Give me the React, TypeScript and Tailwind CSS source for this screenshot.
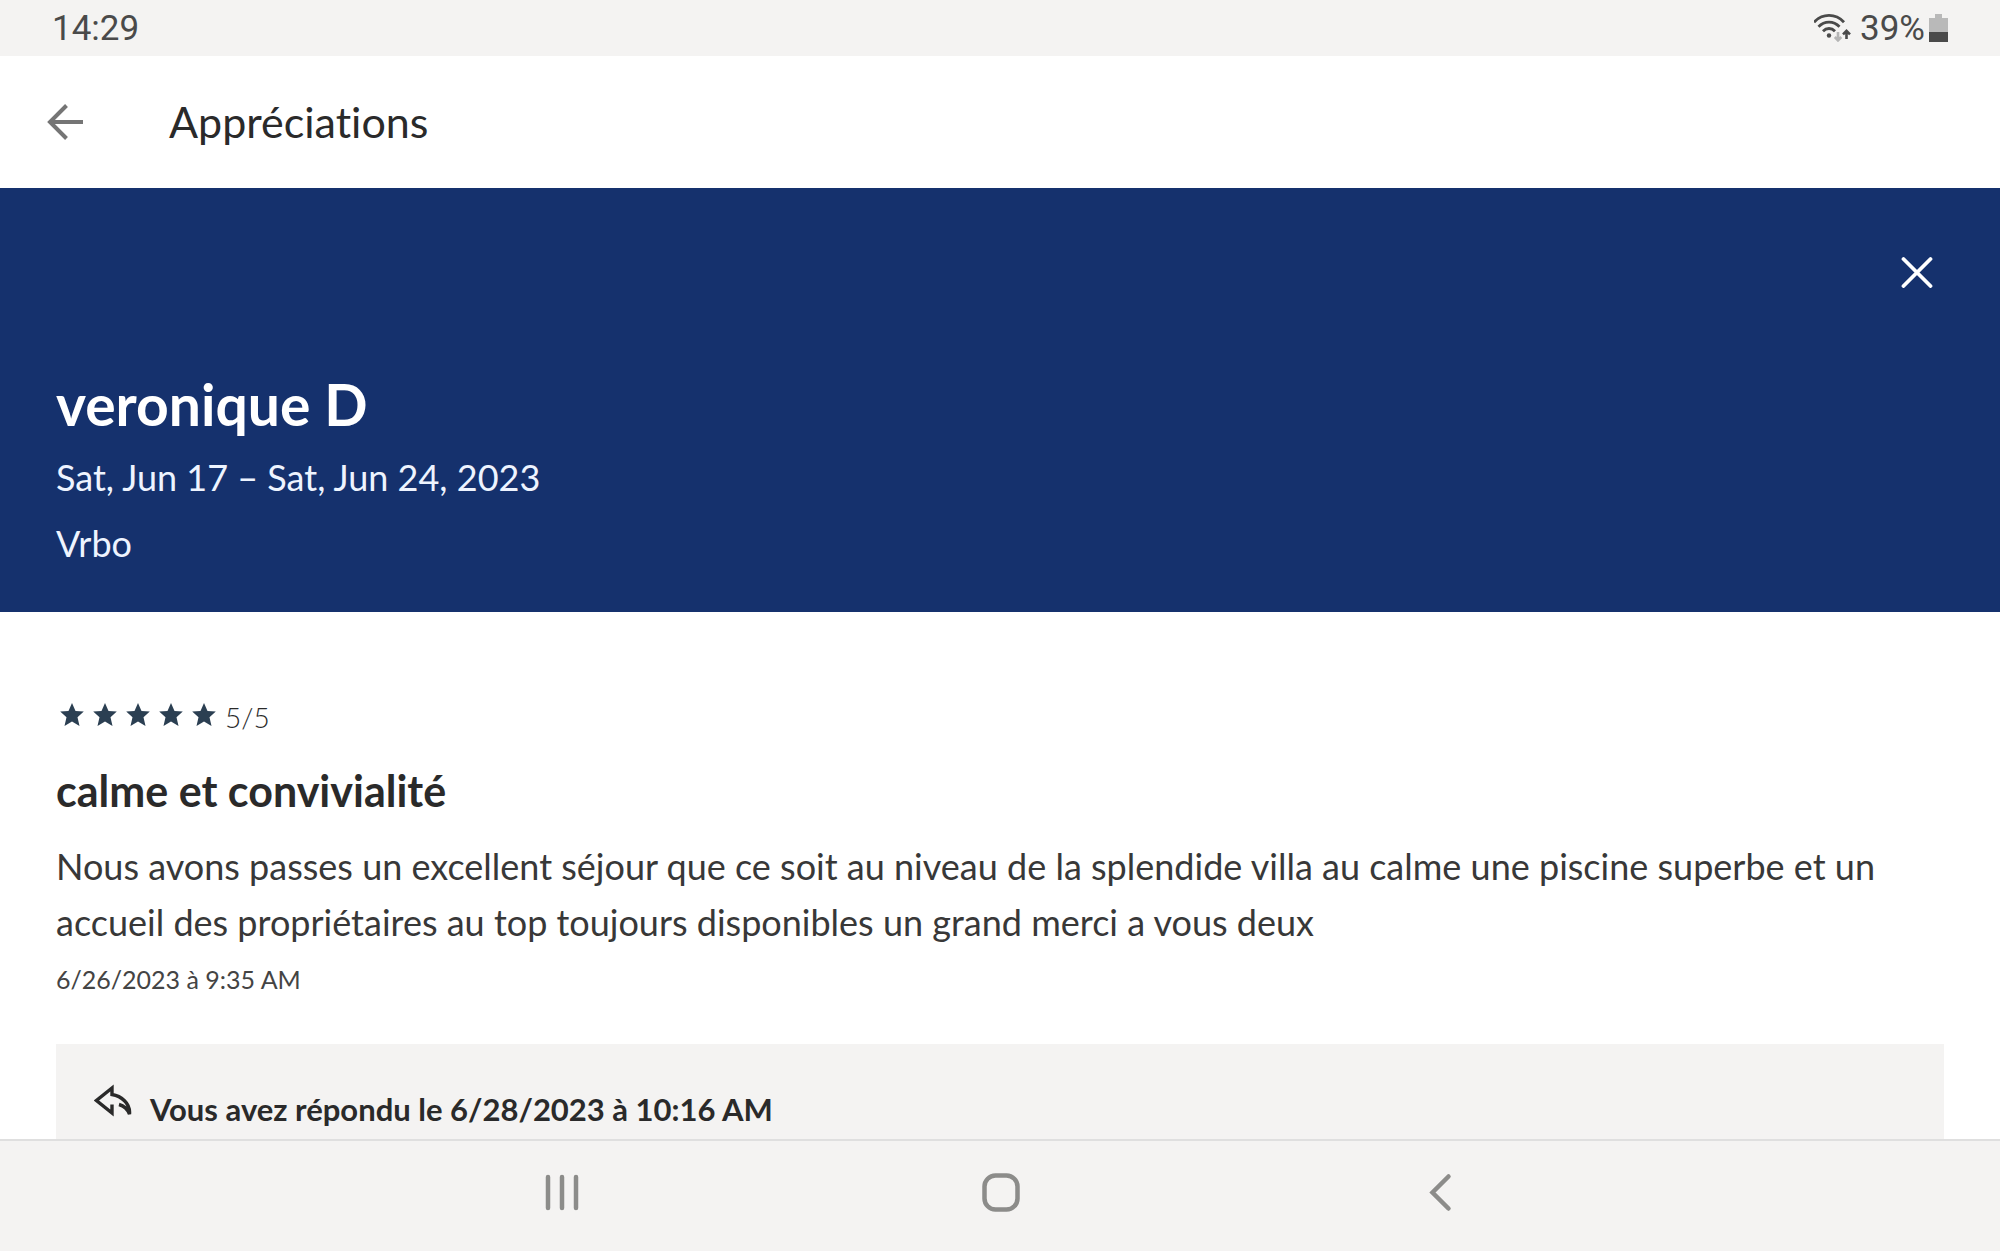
import { useState } from 'react';

const stars = [1, 2, 3, 4, 5];

function StatusBar() {
    return (
        <div className="flex h-14 shrink-0 items-center justify-between bg-[#f4f3f2] px-[52px] font-['Roboto',sans-serif] text-[35px] leading-[56px] text-[#4a4a4a]">
            <span className="pt-0.5">14:29</span>
            <div className="flex items-center">
                <svg className="mr-2 h-7 w-[38px]" viewBox="0 0 38 28" fill="none" stroke="#4a4a4a" strokeWidth="2.8">
                    <path d="M0 8.2C8.500-.8 21.500-.8 30 8.2" />
                    <path d="M4.500 12.8c6-6.2 15-6.2 21 0" />
                    <path d="M9 17.2c3.500-3.600 8.500-3.600 12 0" />
                    <circle cx="15" cy="21.500" r="2.200" fill="#4a4a4a" stroke="none" />
                    <path d="M24 18v8M20.800 23l3.200 3.400L27.300 23" stroke="#b5b5b5" strokeWidth="2.6" />
                    <path d="M32.500 25v-8M29 20.300l3.500-3.500 3.500 3.500" strokeWidth="2.6" />
                </svg>
                <span className="pt-0.5">39%</span>
                <svg className="ml-1 h-7 w-[19px]" viewBox="0 0 19 28">
                    <path d="M6 0h7v4h6v14H0V4h6z" fill="#b9b9b9" />
                    <path d="M0 18h19v10H0z" fill="#4a4a4a" />
                </svg>
            </div>
        </div>
    );
}

function AppBar() {
    return (
        <header className="flex h-[132px] shrink-0 items-center bg-white px-[47px]">
            <button aria-label="Retour" className="mr-[86px]">
                <svg className="h-9 w-9" viewBox="0 0 36 36" fill="none" stroke="#757575" strokeWidth="4">
                    <path d="M36.500 18H3M19.500 1.500L3 18l16.500 16.500" />
                </svg>
            </button>
            <h1 className="text-[43px] leading-[52px] text-[#2a2a2a]">Appréciations</h1>
        </header>
    );
}

function GuestHeader({ onClose }: { onClose: () => void }) {
    return (
        <section className="flex shrink-0 flex-col bg-[#15316d] px-14 pt-[68px] pb-9 text-white">
            <button aria-label="Fermer" onClick={onClose} className="mr-[11px] self-end">
                <svg className="h-8 w-8" viewBox="0 0 32 32" fill="none" stroke="currentColor" strokeWidth="3.8" strokeLinecap="round">
                    <path d="M2.500 3l27 27M29.500 3l-27 27" />
                </svg>
            </button>
            <h2 className="mt-[76px] text-[57px] leading-[80px] font-bold">veronique D</h2>
            <p className="text-[36px] leading-[66px] text-[#eef4ff]">Sat, Jun 17 – Sat, Jun 24, 2023</p>
            <p className="text-[36px] leading-[66px] text-[#eef4ff]">Vrbo</p>
        </section>
    );
}

function Review() {
    return (
        <article className="px-14 pt-[79px] text-[#2a2a2a]">
            <div className="flex items-center">
                <div className="mb-1 flex gap-[9px] pl-1" role="img" aria-label="5 sur 5">
                    {stars.map((star) => (
                        <svg key={star} className="h-6 w-6" viewBox="0 0 24 24" fill="#2b3f52">
                            <path d="M12 0l3.500 8 8.300.6-6.300 5.600 2 8.800L12 18.600 4.500 23l2-8.800L.2 8.600 8.500 8z" />
                        </svg>
                    ))}
                </div>
                <span className="ml-[9px] text-[28px] leading-[52px] font-light">5/5</span>
            </div>
            <h3 className="mt-5 text-[43px] leading-[56px] font-bold">calme et convivialité</h3>
            <p className="mt-[19px] text-[36px] leading-[56px] text-[#383838]">
                Nous avons passes un excellent séjour que ce soit au niveau de la splendide villa au calme une piscine superbe et un accueil des
                propriétaires au top toujours disponibles un grand merci a vous deux
            </p>
            <p className="mt-[3px] text-[25px] leading-[52px] text-[#444444]">6/26/2023 à 9:35 AM</p>
            <div className="mt-[39px] flex bg-[#f4f3f2] px-[38px] py-[39px]">
                <svg className="mr-[18px] h-9 w-[38px]" viewBox="0 0 38 36" fill="none" stroke="#2a2a2a" strokeWidth="3.4" strokeLinejoin="miter">
                    <path d="M25 21.500c5.500 1.500 8.500 4.500 10.500 9.500 1-11-8.500-18-17.500-19.500V5L2.500 17.500 18 30v-8.500" />
                </svg>
                <h4 className="text-[31px] leading-[52px] font-bold">Vous avez répondu le 6/28/2023 à 10:16 AM</h4>
            </div>
        </article>
    );
}

function NavBar() {
    return (
        <nav className="flex h-28 shrink-0 items-center justify-center gap-[400px] border-t-2 border-[#dfdfdf] bg-[#f4f3f2] pb-1.5 text-[#8c8c8a]">
            <button aria-label="Applications récentes">
                <svg className="h-10 w-10" viewBox="0 0 40 40" fill="none" stroke="currentColor" strokeWidth="4.500" strokeLinecap="round">
                    <path d="M8 4v31M22 4v31M36 4v31" />
                </svg>
            </button>
            <button aria-label="Accueil">
                <svg className="h-10 w-10" viewBox="0 0 40 40" fill="none" stroke="currentColor" strokeWidth="4.500">
                    <rect x="4.500" y="2.500" width="33" height="34" rx="11" />
                </svg>
            </button>
            <button aria-label="Précédent">
                <svg className="h-10 w-10" viewBox="0 0 40 40" fill="none" stroke="currentColor" strokeWidth="4.500" strokeLinecap="round">
                    <path d="M28.500 3.500L12.500 19.500l16 16" />
                </svg>
            </button>
        </nav>
    );
}

export default function App() {
    const [isOpen, setIsOpen] = useState(true);

    return (
        <div className="flex h-screen flex-col bg-white font-['Lato',sans-serif] [font-variant-ligatures:none]">
            <StatusBar />
            <AppBar />
            <main className="flex min-h-0 flex-1 flex-col overflow-hidden">
                {isOpen && (
                    <>
                        <GuestHeader onClose={() => setIsOpen(false)} />
                        <Review />
                    </>
                )}
            </main>
            <NavBar />
        </div>
    );
}
